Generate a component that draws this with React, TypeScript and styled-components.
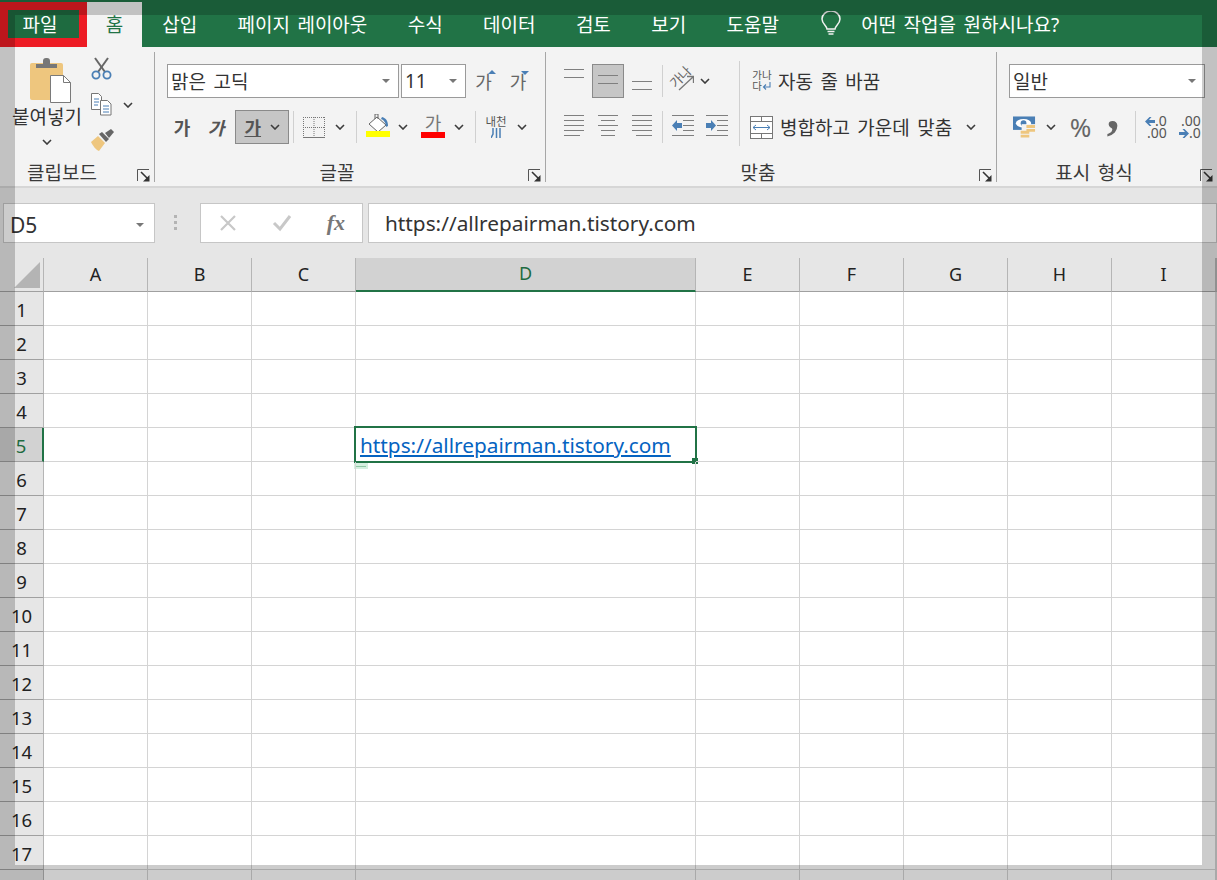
import React from 'react'
import styled, { createGlobalStyle } from 'styled-components'

const GREEN = '#217346'
const LINE = '#7f7f7f'
const BLUE = '#4a7fb5'
const TAN = '#eec67e'

const GlobalStyle = createGlobalStyle`
  html, body {
    margin: 0;
    height: 100%;
    overflow: hidden;
    background: #fff;
    font-family: "Noto Sans", "Noto Sans CJK KR", sans-serif;
    color: #333;
  }
  * { box-sizing: border-box; }
`

const Chevron = () => (
  <svg width="10" height="6" viewBox="0 0 10 6">
    <polyline points="1,1 5,5 9,1" fill="none" stroke="#3c3c3c" strokeWidth="1.6" />
  </svg>
)

const Launcher = () => (
  <svg width="13" height="13" viewBox="0 0 13 13">
    <polyline points="0.5,12 0.5,0.5 12,0.5" fill="none" stroke="#555" strokeWidth="1" />
    <polyline points="4,3 11,10" fill="none" stroke="#333" strokeWidth="1.6" />
    <polygon points="12.5,12.5 6,12.5 12.5,6" fill="#333" />
  </svg>
)

const Lines = ({ rows, h = 34 }: { rows: number[][]; h?: number }) => (
  <svg width="20" height={h} viewBox={`0 0 20 ${h}`}>
    {rows.map(([x1, x2, y]) => (
      <line key={`${x1}-${y}`} x1={x1} x2={x2} y1={y + 0.5} y2={y + 0.5} stroke={LINE} strokeWidth="1" />
    ))}
  </svg>
)

const PasteIcon = () => (
  <svg width="42" height="46" viewBox="0 0 42 46">
    <rect x="0" y="5" width="33" height="37" rx="2" fill={TAN} />
    <path d="M6 10V6h7V3a3 3 0 0 1 3-3h1a3 3 0 0 1 3 3v3h7v4z" fill="#777" />
    <path d="M20.5 17.5h13l7 7v20h-20z" fill="#fff" stroke="#7a7a7a" />
    <path d="M33.5 17.5v7h7" fill="none" stroke="#7a7a7a" />
  </svg>
)

const ScissorsIcon = () => (
  <svg width="21" height="23" viewBox="0 0 21 23">
    <line x1="4" y1="1" x2="14" y2="15" stroke="#666" strokeWidth="2" />
    <line x1="17" y1="1" x2="7" y2="15" stroke="#666" strokeWidth="2" />
    <circle cx="5" cy="18" r="3.6" fill="none" stroke={BLUE} strokeWidth="1.8" />
    <circle cx="16" cy="18" r="3.6" fill="none" stroke={BLUE} strokeWidth="1.8" />
  </svg>
)

const CopyIcon = () => (
  <svg width="21" height="23" viewBox="0 0 21 23">
    <path d="M0.5 0.5h7l3 3v13h-10z" fill="#fff" stroke="#777" />
    <path d="M9.5 7.5h7l3.5 3.5v11h-10.500z" fill="#fff" stroke="#777" />
    <path d="M3 6h5M3 9h5M3 12h4M12 13h6M12 16h6M12 19h6" stroke={BLUE} strokeWidth="1" />
  </svg>
)

const BrushIcon = () => (
  <svg width="24" height="22" viewBox="0 0 24 22">
    <path d="M0 13l7-6 7 7-6 8c-3-1-6-5-8-9z" fill={TAN} />
    <path d="M8 5l3-2 7 7-3 3z" fill="#666" />
    <path d="M14 4l6-4 3 3-5 6z" fill="#666" />
  </svg>
)

const BorderIcon = () => (
  <svg width="22" height="21" viewBox="0 0 22 21">
    <path d="M0.5 0v20M11 0v20M21.500 0v20M0 0.5h22M0 10.500h22" stroke="#777" strokeDasharray="1 1" fill="none" />
    <line x1="0" x2="22" y1="20.500" y2="20.500" stroke="#777" strokeWidth="1" />
  </svg>
)

const FillIcon = () => (
  <svg width="24" height="26" viewBox="0 0 24 26">
    <path d="M11 3l9 8-8 7-9-8z" fill="#fff" stroke="#666" />
    <path d="M9 5V0h3v5" fill="none" stroke="#666" />
    <path d="M16 3c4 1 6 4 6 9l-2 1c0-4-2-7-5-8z" fill={BLUE} />
    <rect x="0" y="17" width="24" height="6" fill="#ffff00" />
  </svg>
)

const WrapArrow = () => (
  <svg width="9" height="8" viewBox="0 0 9 8">
    <path d="M8 0v5H2M4 2.500L1.500 5 4 7.500" fill="none" stroke={BLUE} strokeWidth="1.100" />
  </svg>
)

const MergeIcon = () => (
  <svg width="23" height="23" viewBox="0 0 23 23">
    <rect x="0.5" y="0.5" width="22" height="22" fill="#fff" stroke="#777" />
    <path d="M0 5.500h23M0 17.500h23M11.500 0v5M11.500 18v5" stroke="#777" />
    <path d="M3 11.500h17M6 9l-3 2.500 3 2.500M17 9l3 2.500-3 2.500" fill="none" stroke={BLUE} />
  </svg>
)

const IndentIcon = ({ forward }: { forward?: boolean }) => (
  <svg width="22" height="24" viewBox="0 0 22 24">
    <path d="M0 0.500h22M11 5.500h11M11 10.500h11M11 15.500h11M0 20.500h22" stroke={LINE} />
    <path
      d={forward ? 'M10 10.500L5 5v3H0v5h5v3z' : 'M0 10.500L5 5v3h5v5H5v3z'}
      fill={BLUE}
    />
  </svg>
)

const MoneyIcon = () => (
  <svg width="24" height="23" viewBox="0 0 24 23">
    <rect x="0" y="0" width="23" height="14" fill={BLUE} />
    <ellipse cx="11" cy="7" rx="8" ry="4.500" fill="#fff" />
    <circle cx="11" cy="7" r="3" fill={BLUE} />
    <rect x="9" y="8" width="15" height="10" fill="#f3f3f3" />
    <path d="M14 9h9v3h-9zM14 13h9v3h-9z" fill={TAN} />
    <path d="M8 15h9v3H8zM8 19h9v3H8z" fill={TAN} />
  </svg>
)

const SideArrow = ({ left }: { left?: boolean }) => (
  <svg width="10" height="9" viewBox="0 0 10 9" style={left ? undefined : { transform: 'scaleX(-1)' }}>
    <path d="M0 4.500L4.500 0h2L4 3h6v3H4l2.500 3h-2z" fill={BLUE} />
  </svg>
)

const BulbIcon = () => (
  <svg width="20" height="26" viewBox="0 0 20 26">
    <path
      d="M6 18c0-3-5-5-5-10a9 8 0 0 1 18 0c0 5-5 7-5 10z"
      fill="none"
      stroke="#f2f2f2"
      strokeWidth="1.500"
    />
    <path d="M6.500 20.500h7M7.500 23h5" stroke="#f2f2f2" strokeWidth="1.500" />
  </svg>
)

const FxBarIcon = ({ check }: { check?: boolean }) => (
  <svg width="20" height="18" viewBox="0 0 20 18">
    {check ? (
      <polyline points="2,9 8,15 18,2" fill="none" stroke="#c8c8c8" strokeWidth="3" />
    ) : (
      <path d="M3 2l14 14M17 2L3 16" stroke="#c8c8c8" strokeWidth="2.200" />
    )}
  </svg>
)

const OrientArrow = () => (
  <svg width="16" height="16" viewBox="0 0 16 16">
    <path d="M1 15L15 2M9 1.500h6.500V8" fill="none" stroke="#777" strokeWidth="1.300" />
  </svg>
)

const TABS = ['삽입', '페이지 레이아웃', '수식', '데이터', '검토', '보기', '도움말']
const COLUMNS = ['A', 'B', 'C', 'D', 'E', 'F', 'G', 'H', 'I', '']
const ROWS = Array.from({ length: 18 }, (_, i) => i + 1)
const URL = 'https://allrepairman.tistory.com'

const App = (): JSX.Element => (
  <Page>
    <GlobalStyle />
    <TabBar>
      <FileTab>파일</FileTab>
      <HomeTab>홈</HomeTab>
      {TABS.map((tab) => (
        <Tab key={tab}>{tab}</Tab>
      ))}
      <TellMe>
        <BulbIcon />
        <span>어떤 작업을 원하시나요?</span>
      </TellMe>
    </TabBar>

    <Ribbon>
      <Group $width={155}>
        <ClipBody>
          <Paste>
            <PasteArt>
              <PasteIcon />
            </PasteArt>
            <PasteLabel>붙여넣기</PasteLabel>
            <Chevron />
          </Paste>
          <ClipTools>
            <ScissorsIcon />
            <CopyRow>
              <CopyIcon />
              <Slot $w={14} $ml={9}>
                <Chevron />
              </Slot>
            </CopyRow>
            <BrushIcon />
          </ClipTools>
        </ClipBody>
        <GroupFooter>
          <GroupLabel $pr={4}>클립보드</GroupLabel>
          <LauncherSlot>
            <Launcher />
          </LauncherSlot>
        </GroupFooter>
      </Group>

      <Group $width={391}>
        <Rows $left={12}>
          <Row>
            <SelectBox $w={232}>
              <span>맑은 고딕</span>
              <Caret />
            </SelectBox>
            <SelectBox $w={65} $ml={2}>
              <span>11</span>
              <Caret />
            </SelectBox>
            <Slot $w={23} $ml={6}>
              <Glyph $grey>가</Glyph>
              <SizeMark />
            </Slot>
            <Slot $w={20} $ml={13}>
              <Glyph $grey>가</Glyph>
              <SizeMark $down />
            </Slot>
          </Row>
          <Row>
            <Slot $w={30}>
              <Glyph $bold>가</Glyph>
            </Slot>
            <Slot $w={38}>
              <Glyph $bold $italic>
                가
              </Glyph>
            </Slot>
            <ActiveButton $w={54}>
              <Glyph $bold $underline>
                가
              </Glyph>
              <Chevron />
            </ActiveButton>
            <Sep $ml={4} />
            <Slot $w={22} $ml={9}>
              <BorderIcon />
            </Slot>
            <Slot $w={14} $ml={8}>
              <Chevron />
            </Slot>
            <Sep $ml={9} />
            <Slot $w={24} $ml={9}>
              <FillIcon />
            </Slot>
            <Slot $w={14} $ml={6}>
              <Chevron />
            </Slot>
            <Slot $w={24} $ml={11}>
              <ColorGlyph>가</ColorGlyph>
            </Slot>
            <Slot $w={14} $ml={7}>
              <Chevron />
            </Slot>
            <Sep $ml={9} />
            <Slot $w={22} $ml={9}>
              <Phonetic>
                <span>내천</span>
                <svg width="10" height="10" viewBox="0 0 10 10">
                  <path d="M2 0v6l-2 4M5.500 0v10M9 0v10" stroke={BLUE} strokeWidth="1.500" fill="none" />
                </svg>
              </Phonetic>
            </Slot>
            <Slot $w={14} $ml={8}>
              <Chevron />
            </Slot>
          </Row>
        </Rows>
        <GroupFooter>
          <GroupLabel>글꼴</GroupLabel>
          <LauncherSlot>
            <Launcher />
          </LauncherSlot>
        </GroupFooter>
      </Group>

      <Group $width={451}>
        <AlignBody>
          <Rows $left={18}>
            <Row>
              <Slot $w={20}>
                <Lines rows={[[0, 20, 5], [0, 20, 13]]} />
              </Slot>
              <ActiveButton $w={32} $ml={8}>
                <Lines rows={[[0, 20, 10], [0, 20, 18]]} h={32} />
              </ActiveButton>
              <Slot $w={20} $ml={8}>
                <Lines rows={[[0, 20, 17], [0, 20, 25]]} />
              </Slot>
              <Sep $ml={10} />
              <Slot $w={24} $ml={8}>
                <Orientation>가나</Orientation>
                <OrientMark>
                  <OrientArrow />
                </OrientMark>
              </Slot>
              <Slot $w={14} $ml={3}>
                <Chevron />
              </Slot>
            </Row>
            <Row>
              <Slot $w={20}>
                <Lines rows={[[0, 20, 5], [0, 20, 10], [0, 20, 15], [0, 20, 20], [0, 16, 25]]} />
              </Slot>
              <Slot $w={20} $ml={14}>
                <Lines rows={[[0, 20, 5], [3, 17, 10], [0, 20, 15], [3, 17, 20], [3, 17, 25]]} />
              </Slot>
              <Slot $w={20} $ml={14}>
                <Lines rows={[[0, 20, 5], [0, 20, 10], [0, 20, 15], [0, 20, 20], [4, 20, 25]]} />
              </Slot>
              <Sep $ml={10} />
              <Slot $w={22} $ml={9}>
                <IndentIcon />
              </Slot>
              <Slot $w={22} $ml={12}>
                <IndentIcon forward />
              </Slot>
            </Row>
          </Rows>
          <TallSep />
          <Rows $left={0}>
            <Row>
              <Slot $w={18} $ml={13}>
                <WrapGlyph>
                  <span>가나</span>
                  <span>
                    다<WrapArrow />
                  </span>
                </WrapGlyph>
              </Slot>
              <RibbonText $ml={7}>자동 줄 바꿈</RibbonText>
            </Row>
            <Row>
              <Slot $w={23} $ml={10}>
                <MergeIcon />
              </Slot>
              <RibbonText $ml={7}>병합하고 가운데 맞춤</RibbonText>
              <Slot $w={14} $ml={12}>
                <Chevron />
              </Slot>
            </Row>
          </Rows>
        </AlignBody>
        <GroupFooter>
          <GroupLabel>맞춤</GroupLabel>
          <LauncherSlot>
            <Launcher />
          </LauncherSlot>
        </GroupFooter>
      </Group>

      <Group $width={220} $last>
        <Rows $left={12}>
          <Row>
            <SelectBox $w={196}>
              <span>일반</span>
              <Caret />
            </SelectBox>
          </Row>
          <Row>
            <Slot $w={23} $ml={4}>
              <MoneyIcon />
            </Slot>
            <Slot $w={14} $ml={8}>
              <Chevron />
            </Slot>
            <Slot $w={21} $ml={12}>
              <Percent>%</Percent>
            </Slot>
            <Slot $w={20} $ml={12}>
              <Comma>,</Comma>
            </Slot>
            <Sep $ml={12} />
            <Slot $w={22} $ml={9}>
              <Decimal>
                <span>
                  <SideArrow left />.0
                </span>
                <span>.00</span>
              </Decimal>
            </Slot>
            <Slot $w={22} $ml={12}>
              <Decimal>
                <span>.00</span>
                <span>
                  <SideArrow />.0
                </span>
              </Decimal>
            </Slot>
          </Row>
        </Rows>
        <GroupFooter>
          <GroupLabel>표시 형식</GroupLabel>
          <LauncherSlot>
            <Launcher />
          </LauncherSlot>
        </GroupFooter>
      </Group>
    </Ribbon>

    <FormulaBar>
      <NameBox>
        <span>D5</span>
        <Caret />
      </NameBox>
      <Dots>
        <i />
        <i />
        <i />
      </Dots>
      <FxBox>
        <FxBarIcon />
        <FxBarIcon check />
        <FxLabel>fx</FxLabel>
      </FxBox>
      <FormulaInput>{URL}</FormulaInput>
    </FormulaBar>

    <Sheet>
      <CornerCell />
      {COLUMNS.map((col) => (
        <ColHeader key={col || 'rest'} $active={col === 'D'}>
          {col}
        </ColHeader>
      ))}
      {ROWS.map((row) => (
        <React.Fragment key={row}>
          <RowHeader $active={row === 5}>{row < 18 ? row : ''}</RowHeader>
          {COLUMNS.map((col) => (
            <Cell key={col}>
              {row === 5 && col === 'D' && (
                <Selection>
                  <LinkText>{URL}</LinkText>
                  <Handle />
                  <SmartTag />
                </Selection>
              )}
            </Cell>
          ))}
        </React.Fragment>
      ))}
    </Sheet>

    <Dimmer />
  </Page>
)

const Page = styled.div`
  position: relative;
  width: 1217px;
  height: 880px;
  overflow: hidden;
  background: #e6e6e6;
  word-spacing: 2.5px;
`

const Dimmer = styled.div`
  position: absolute;
  inset: 0;
  border: 15px solid rgba(0, 0, 0, 0.2);
  pointer-events: none;
`

const TabBar = styled.div`
  display: flex;
  align-items: stretch;
  height: 47px;
  padding-top: 2px;
  background: ${GREEN};
  color: #fff;
  font-size: 19px;
`

const Tab = styled.div`
  display: flex;
  align-items: center;
  padding: 0 20.2px 2px;
  white-space: nowrap;
`

const FileTab = styled(Tab)`
  width: 87px;
  padding: 0 7px 0 0;
  justify-content: center;
  background: #1e6b40;
  border: 8px solid #ed1c24;
  border-bottom-width: 9px;
`

const HomeTab = styled(Tab)`
  width: 55px;
  padding: 0 0 2px;
  justify-content: center;
  background: #f3f3f3;
  color: ${GREEN};
`

const TellMe = styled.div`
  display: flex;
  align-items: center;
  gap: 20px;
  margin-left: 22px;
  padding-bottom: 2px;
`

const Ribbon = styled.div`
  display: flex;
  height: 141px;
  padding-top: 5px;
  background: #f3f3f3;
  border-bottom: 2px solid #d6d6d6;
`

const Group = styled.div<{ $width: number; $last?: boolean }>`
  display: flex;
  flex-direction: column;
  justify-content: space-between;
  width: ${(p) => p.$width}px;
  height: 130px;
  border-right: ${(p) => (p.$last ? 'none' : '1px solid #a6a6a6')};
`

const ClipBody = styled.div`
  display: flex;
  height: 100px;
`

const Paste = styled.div`
  display: flex;
  flex-direction: column;
  align-items: center;
  width: 74px;
  margin: 6px 0 0 10px;
`

const PasteArt = styled.div`
  display: flex;
  height: 46px;
  margin-left: 7px;
`

const PasteLabel = styled.div`
  margin: 1px 0 10px;
  font-size: 19px;
  line-height: 24px;
  white-space: nowrap;
`

const ClipTools = styled.div`
  display: flex;
  flex-direction: column;
  gap: 13px;
  margin: 5px 0 0 7px;
`

const CopyRow = styled.div`
  display: flex;
  align-items: center;
`

const GroupFooter = styled.div`
  display: flex;
  align-items: flex-end;
  height: 24px;
`

const GroupLabel = styled.div<{ $pr?: number }>`
  flex: 1;
  margin-bottom: -3px;
  padding-right: ${(p) => p.$pr ?? 0}px;
  text-align: center;
  font-size: 19px;
  line-height: 24px;
  color: #3a3a3a;
`

const LauncherSlot = styled.div`
  display: flex;
  width: 26px;
  padding: 0 0 0 9px;
`

const Rows = styled.div<{ $left: number }>`
  display: flex;
  flex-direction: column;
  gap: 12px;
  padding: 12px 0 0 ${(p) => p.$left}px;
`

const Row = styled.div`
  display: flex;
  align-items: center;
  height: 34px;
`

const Slot = styled.div<{ $w: number; $ml?: number }>`
  position: relative;
  display: flex;
  align-items: center;
  justify-content: center;
  flex: none;
  width: ${(p) => p.$w}px;
  margin-left: ${(p) => p.$ml ?? 0}px;
`

const SelectBox = styled.div<{ $w: number; $ml?: number }>`
  display: flex;
  align-items: center;
  justify-content: space-between;
  flex: none;
  width: ${(p) => p.$w}px;
  height: 34px;
  margin-left: ${(p) => p.$ml ?? 0}px;
  padding: 0 8px 0 3px;
  background: #fff;
  border: 1px solid #9a9a9a;
  font-size: 19px;
  color: #333;
`

const Caret = styled.i`
  width: 0;
  height: 0;
  border-left: 4px solid transparent;
  border-right: 4px solid transparent;
  border-top: 4px solid #777;
`

const Glyph = styled.span<{ $bold?: boolean; $italic?: boolean; $underline?: boolean; $grey?: boolean }>`
  font-size: 18px;
  font-weight: ${(p) => (p.$bold ? 700 : 400)};
  font-style: ${(p) => (p.$italic ? 'italic' : 'normal')};
  text-decoration: ${(p) => (p.$underline ? 'underline' : 'none')};
  color: ${(p) => (p.$grey ? '#666' : '#555')};
`

const SizeMark = styled.i<{ $down?: boolean }>`
  position: absolute;
  top: ${(p) => (p.$down ? '3px' : '2px')};
  right: -1px;
  width: 0;
  height: 0;
  border-left: 4px solid transparent;
  border-right: 4px solid transparent;
  border-${(p) => (p.$down ? 'top' : 'bottom')}: 4px solid ${BLUE};
`

const ActiveButton = styled.div<{ $w: number; $ml?: number }>`
  display: flex;
  align-items: center;
  justify-content: space-evenly;
  flex: none;
  width: ${(p) => p.$w}px;
  height: 34px;
  margin-left: ${(p) => p.$ml ?? 0}px;
  background: #c6c6c6;
  border: 1px solid #8a8a8a;
`

const Sep = styled.div<{ $ml?: number }>`
  flex: none;
  width: 1px;
  height: 32px;
  margin-left: ${(p) => p.$ml ?? 0}px;
  background: #d0d0d0;
`

const TallSep = styled.div`
  flex: none;
  width: 1px;
  height: 85px;
  margin: 9px 0 0 11px;
  background: #d0d0d0;
`

const ColorGlyph = styled.span`
  width: 24px;
  height: 24px;
  margin-top: -2px;
  text-align: center;
  font-size: 18px;
  line-height: 19px;
  color: #777;
  border-bottom: 6px solid #ff0000;
`

const Phonetic = styled.span`
  display: flex;
  flex-direction: column;
  align-items: center;
  font-size: 11.5px;
  line-height: 12px;
  color: #555;
`

const Orientation = styled.span`
  transform: translate(-3px, -5px) rotate(-45deg);
  font-size: 13px;
  color: #666;
  white-space: nowrap;
`

const OrientMark = styled.span`
  position: absolute;
  left: 7px;
  top: 3px;
  display: flex;
`

const WrapGlyph = styled.span`
  display: flex;
  flex-direction: column;
  font-size: 10.5px;
  line-height: 11px;
  color: #555;
  white-space: nowrap;
`

const RibbonText = styled.span<{ $ml: number }>`
  flex: none;
  margin-left: ${(p) => p.$ml}px;
  font-size: 19px;
  color: #333;
  white-space: nowrap;
`

const AlignBody = styled.div`
  display: flex;
`

const Percent = styled.span`
  font-size: 26px;
  color: #666;
`

const Comma = styled.span`
  margin-top: -32px;
  font-family: "Liberation Serif", serif;
  font-size: 50px;
  font-weight: 700;
  line-height: 24px;
  color: #666;
`

const Decimal = styled.span`
  display: flex;
  flex-direction: column;
  align-items: flex-end;
  font-size: 14px;
  line-height: 12px;
  color: #555;
  white-space: nowrap;
`

const FormulaBar = styled.div`
  display: flex;
  align-items: flex-start;
  height: 70px;
  padding: 15px 0 0 3px;
  background: #e6e6e6;
`

const NameBox = styled.div`
  display: flex;
  align-items: center;
  justify-content: space-between;
  width: 152px;
  height: 40px;
  padding: 3px 10px 0 6px;
  background: #fff;
  border: 1px solid #c6c6c6;
  font-size: 21px;
  color: #333;
`

const Dots = styled.div`
  display: flex;
  flex-direction: column;
  gap: 3px;
  width: 45px;
  padding: 12px 0 0 19px;
  i {
    width: 3px;
    height: 3px;
    background: #b4b4b4;
  }
`

const FxBox = styled.div`
  display: flex;
  align-items: center;
  justify-content: space-between;
  width: 163px;
  height: 40px;
  padding: 0 17px;
  background: #fff;
  border: 1px solid #c6c6c6;
`

const FxLabel = styled.span`
  font-family: "Liberation Serif", serif;
  font-size: 22px;
  font-style: italic;
  font-weight: 700;
  color: #777;
`

const FormulaInput = styled.div`
  flex: 1;
  display: flex;
  align-items: center;
  height: 40px;
  margin-left: 5px;
  padding-left: 16px;
  background: #fff;
  border: 1px solid #c6c6c6;
  font-size: 20.800px;
  color: #333;
`

const Sheet = styled.div`
  display: grid;
  grid-template-columns: 44px repeat(3, 104px) 340px repeat(5, 104px) 1fr;
  grid-auto-rows: 34px;
  background: #fff;
`

const CornerCell = styled.div`
  background: #e6e6e6;
  border-right: 1px solid #b5b5b5;
  border-bottom: 1px solid #a0a0a0;
  &::after {
    content: '';
    display: block;
    width: 26px;
    height: 26px;
    margin: 4px 0 0 14px;
    background: #b4b4b4;
    clip-path: polygon(100% 0, 100% 100%, 0 100%);
  }
`

const ColHeader = styled.div<{ $active?: boolean }>`
  display: flex;
  align-items: center;
  justify-content: center;
  padding-bottom: 2px;
  font-size: 18px;
  color: ${(p) => (p.$active ? '#1e6b41' : '#222')};
  background: ${(p) => (p.$active ? '#d2d2d2' : '#e6e6e6')};
  border-right: 1px solid #b5b5b5;
  border-bottom: ${(p) => (p.$active ? `2px solid ${GREEN}` : '1px solid #a0a0a0')};
`

const RowHeader = styled.div<{ $active?: boolean }>`
  display: flex;
  align-items: center;
  justify-content: center;
  padding-top: 1px;
  font-size: 18.500px;
  color: ${(p) => (p.$active ? '#1e6b41' : '#222')};
  background: ${(p) => (p.$active ? '#d2d2d2' : '#e6e6e6')};
  border-right: ${(p) => (p.$active ? `2px solid ${GREEN}` : '1px solid #b5b5b5')};
  border-bottom: 1px solid #a0a0a0;
`

const Cell = styled.div`
  position: relative;
  border-right: 1px solid #d4d4d4;
  border-bottom: 1px solid #d4d4d4;
`

const Selection = styled.div`
  position: absolute;
  top: -2px;
  left: -2px;
  display: flex;
  align-items: center;
  width: 343px;
  height: 37px;
  padding: 0 0 0 4px;
  border: 2px solid ${GREEN};
`

const LinkText = styled.a`
  font-size: 20.800px;
  color: #0563c1;
  text-decoration: underline;
`

const Handle = styled.i`
  position: absolute;
  right: -3px;
  bottom: -3px;
  width: 6px;
  height: 6px;
  background: ${GREEN};
`

const SmartTag = styled.i`
  position: absolute;
  left: -2px;
  bottom: -8px;
  width: 14px;
  height: 6px;
  background: #d5efdf;
  &::after {
    content: '';
    display: block;
    height: 1px;
    margin: 3px 2px 0;
    background: #8fc7a5;
  }
`

export default App
